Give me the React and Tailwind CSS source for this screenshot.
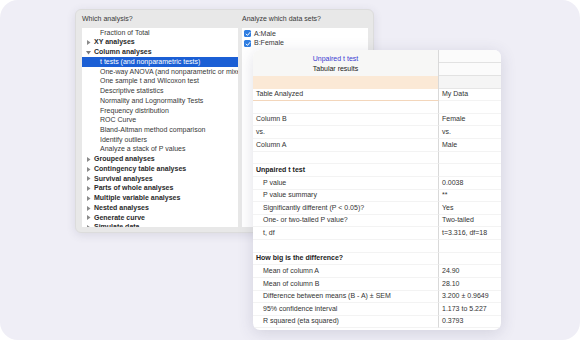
import React from 'react';

/* ── Data ─────────────────────────────────────────── */
const analyses = [
  { text: 'Fraction of Total', child: true },
  { text: 'XY analyses', group: 'closed' },
  { text: 'Column analyses', group: 'open' },
  { text: 't tests (and nonparametric tests)', child: true, selected: true },
  { text: 'One-way ANOVA (and nonparametric or mixed)', child: true },
  { text: 'One sample t and Wilcoxon test', child: true },
  { text: 'Descriptive statistics', child: true },
  { text: 'Normality and Lognormality Tests', child: true },
  { text: 'Frequency distribution', child: true },
  { text: 'ROC Curve', child: true },
  { text: 'Bland-Altman method comparison', child: true },
  { text: 'Identify outliers', child: true },
  { text: 'Analyze a stack of P values', child: true },
  { text: 'Grouped analyses', group: 'closed' },
  { text: 'Contingency table analyses', group: 'closed' },
  { text: 'Survival analyses', group: 'closed' },
  { text: 'Parts of whole analyses', group: 'closed' },
  { text: 'Multiple variable analyses', group: 'closed' },
  { text: 'Nested analyses', group: 'closed' },
  { text: 'Generate curve', group: 'closed' },
  { text: 'Simulate data', group: 'closed' },
];

const results = [
  { label: 'Table Analyzed', value: 'My Data', kind: 'analyzed' },
  { label: '', value: '' },
  { label: 'Column B', value: 'Female' },
  { label: 'vs.', value: 'vs.' },
  { label: 'Column A', value: 'Male' },
  { label: '', value: '' },
  { label: 'Unpaired t test', value: '', kind: 'bold' },
  { label: 'P value', value: '0.0038', kind: 'indent' },
  { label: 'P value summary', value: '**', kind: 'indent' },
  { label: 'Significantly different (P < 0.05)?', value: 'Yes', kind: 'indent' },
  { label: 'One- or two-tailed P value?', value: 'Two-tailed', kind: 'indent' },
  { label: 't, df', value: 't=3.316, df=18', kind: 'indent' },
  { label: '', value: '' },
  { label: 'How big is the difference?', value: '', kind: 'bold' },
  { label: 'Mean of column A', value: '24.90', kind: 'indent' },
  { label: 'Mean of column B', value: '28.10', kind: 'indent' },
  { label: 'Difference between means (B - A) ± SEM', value: '3.200 ± 0.9649', kind: 'indent' },
  { label: '95% confidence interval', value: '1.173 to 5.227', kind: 'indent' },
  { label: 'R squared (eta squared)', value: '0.3793', kind: 'indent' },
];

/* ── Small drawings ───────────────────────────────── */
const Disclosure = ({ open }) => (
  <svg width="5" height="5" viewBox="0 0 5 5" className="shrink-0">
    {open ? <polygon points="0,1 5,1 2.5,4.5" fill="#7a7a7a" /> : <polygon points="1,0 4.5,2.5 1,5" fill="#8a8a8a" />}
  </svg>
);

const Check = () => (
  <span className="w-[7px] h-[7px] rounded-[1.5px] bg-[#2f7de1] flex items-center justify-center shrink-0">
    <svg width="6" height="6" viewBox="0 0 6 6">
      <path d="M1.2 3.1 L2.5 4.4 L4.9 1.5" fill="none" stroke="white" strokeWidth="1" strokeLinecap="round" strokeLinejoin="round" />
    </svg>
  </span>
);

/* ── Parameters dialog ────────────────────────────── */
const AnalysisDialog = () => (
  <div className="absolute left-[75px] top-[9px] w-[299px] h-[224px] rounded-[6px] bg-[#e8e8e8] border border-[#dcdcdc] shadow-[0_2px_10px_rgba(60,60,90,0.12)] flex gap-[4px] pl-[6px] pt-[2px] text-[7px] text-[#383838]">
    <div className="w-[156px] flex flex-col">
      <div className="h-[16px] leading-[14px]">Which analysis?</div>
      <div className="h-[199px] bg-white overflow-hidden">
        {analyses.map((a) => (
          <div
            key={a.text}
            className={`h-[9.74px] flex items-center whitespace-nowrap overflow-hidden ${
              a.selected ? 'bg-[#1b5fd5] text-white' : ''
            } ${a.child ? 'pl-[18px]' : 'pl-[4px] gap-[3px] font-bold text-[#2a2a2a]'}`}
          >
            {a.group && <Disclosure open={a.group === 'open'} />}
            <span>{a.text}</span>
          </div>
        ))}
      </div>
    </div>
    <div className="w-[126px] flex flex-col">
      <div className="h-[16px] leading-[14px]">Analyze which data sets?</div>
      <div className="h-[199px] bg-white pt-[1px]">
        {['A:Male', 'B:Female'].map((d) => (
          <div key={d} className="h-[9.74px] flex items-center gap-[3px] pl-[2px]">
            <Check />
            <span>{d}</span>
          </div>
        ))}
      </div>
    </div>
  </div>
);

/* ── Results sheet ────────────────────────────────── */
const ResultsSheet = () => (
  <div className="absolute left-[253px] top-[50px] w-[248px] h-[280px] rounded-[7px] bg-white overflow-hidden shadow-[0_3px_16px_rgba(60,60,100,0.16)] text-[7px] text-[#333]">
    <div className="grid grid-cols-[186px_1fr]">
      {/* header */}
      <div className="h-[26px] bg-[#f7f7f6] border-r border-[#d9d9d9] text-center pr-[20px] pt-[4px] leading-[9.6px]">
        <div className="text-[#3c3cd2]">Unpaired t test</div>
        <div className="text-[#222]">Tabular results</div>
      </div>
      <div className="h-[26px] bg-[#fbfbfb] flex flex-col">
        <div className="h-[12.6px] border-b border-[#e2e2e2]" />
        <div className="h-[13.4px] border-b border-[#e2e2e2]" />
      </div>
      <div className="h-[12.6px] bg-[#fbe9d6] border-r border-[#d9d9d9]" />
      <div className="h-[12.6px] bg-[#f5f5f5] border-b border-[#e6e6e6]" />

      {/* rows */}
      {results.map((r, i) => (
        <React.Fragment key={i}>
          <div
            className={`h-[12.63px] flex items-center whitespace-nowrap border-r border-[#d9d9d9] ${
              r.kind === 'analyzed' ? 'border-b border-b-[#f3d6bb] pl-[3px]' : 'border-b border-b-[#f3f3f3]'
            } ${r.kind === 'bold' ? 'font-bold pl-[3px] text-[#222]' : ''} ${r.kind === 'indent' ? 'pl-[10px]' : ''} ${
              !r.kind ? 'pl-[3px]' : ''
            }`}
          >
            {r.label}
          </div>
          <div className="h-[12.63px] flex items-center pl-[3px] whitespace-nowrap border-b border-[#f3f3f3]">{r.value}</div>
        </React.Fragment>
      ))}
    </div>
  </div>
);

export default function App() {
  return (
    <div className="w-[580px] h-[340px] bg-white font-['Liberation_Sans',Arial,sans-serif]">
      <div className="relative w-full h-full rounded-[18px] bg-[#efeef6] overflow-hidden">
        <AnalysisDialog />
        <ResultsSheet />
      </div>
    </div>
  );
}
